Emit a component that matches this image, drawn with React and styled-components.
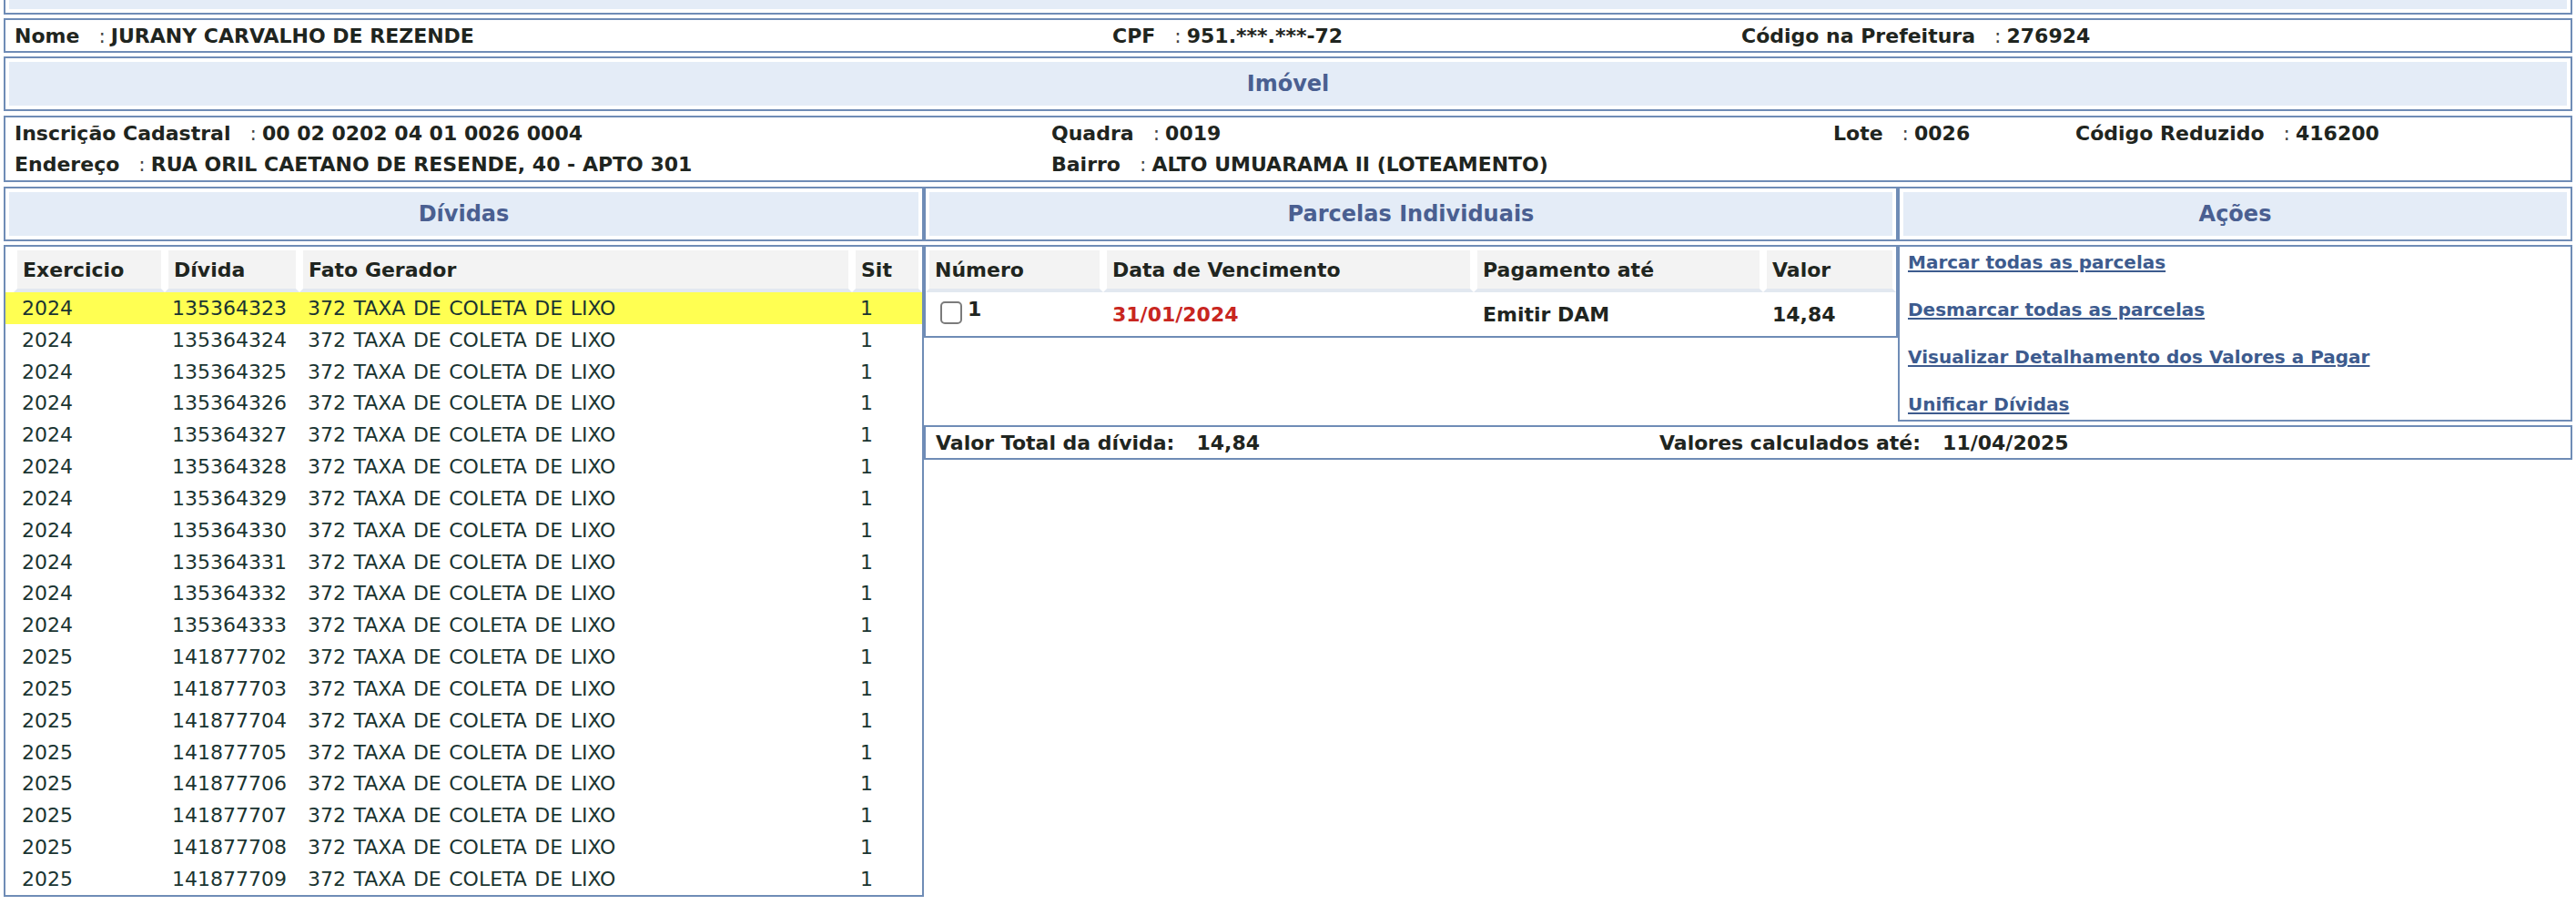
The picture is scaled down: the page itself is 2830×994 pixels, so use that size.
import React from 'react';
import styled, { createGlobalStyle } from 'styled-components';

const GlobalStyle = createGlobalStyle`
  body {
    margin: 0;
    background: #fff;
    font-family: "DejaVu Sans", Verdana, sans-serif;
    color: #1f2520;
  }
  * { box-sizing: border-box; }
`;

const Page = styled.div`
  width: 2830px;
  padding: 0 4px;
  display: flex;
  flex-direction: column;
`;

const Box = styled.div`
  border: 2px solid #6f8cb6;
  padding: ${p => p.$pad || '4px'};
  margin-top: ${p => (p.$gap === undefined ? 4 : p.$gap)}px;
  background: #fff;
`;

const StubBox = styled(Box)`
  border-top: none;
  padding-top: 0;
`;

const HeadCell = styled.div`
  background: #e4ecf7;
  height: ${p => p.$h || 48}px;
  display: flex;
  align-items: center;
  justify-content: center;
  font-size: 24px;
  font-weight: bold;
  color: #4a5f91;
`;

const InfoRow = styled.div`
  display: grid;
  grid-template-columns: ${p => p.$cols};
  height: ${p => p.$h}px;
  align-items: center;
  padding-left: 10px;
  font-size: 22px;
  white-space: nowrap;
`;

const Label = styled.span`
  font-weight: bold;
`;

const Colon = styled.span`
  font-weight: normal;
  color: #444;
  margin: 0 6px 0 21px;
`;

const Value = styled.span`
  font-weight: bold;
`;

const Field = ({ label, value }) => (
  <div>
    <Label>{label}</Label>
    <Colon>:</Colon>
    <Value>{value}</Value>
  </div>
);

const Columns = styled.div`
  display: flex;
  margin-top: 5px;
  align-items: flex-start;
`;

const LeftCol = styled.div`
  width: 1011px;
  flex: none;
  display: flex;
  flex-direction: column;
`;

const RightGrid = styled.div`
  flex: 1;
  display: grid;
  grid-template-columns: 1070px 741px;
  row-gap: 4px;
  align-items: start;
`;

const Wide = styled.div`
  grid-column: 1 / 3;
`;

const TableBox = styled.div`
  border: 2px solid #6f8cb6;
  margin-top: ${p => p.$gap || 0}px;
  background: #fff;
`;

const HeadRow = styled.div`
  display: grid;
  grid-template-columns: ${p => p.$cols};
  padding-left: ${p => p.$indent || 0}px;
`;

const Th = styled.div`
  background: #f3f3f3;
  border: 4px solid #fff;
  border-bottom: 4px solid #e2e8f0;
  height: 50px;
  padding-left: 6px;
  display: flex;
  align-items: center;
  font-size: 22px;
  font-weight: bold;
  white-space: nowrap;
`;

const DebtRow = styled.div`
  display: grid;
  grid-template-columns: 175px 148px 607px 77px;
  height: 34.84px;
  align-items: center;
  background: ${p => (p.$active ? '#ffff52' : '#fff')};
  font-size: 22px;
  word-spacing: 1.5px;
  color: #1a3431;
  white-space: nowrap;
`;

const Td = styled.div`
  padding-left: ${p => p.$pl || 9}px;
`;

const ParcelRow = styled.div`
  display: grid;
  grid-template-columns: 195px 407px 318px 146px;
  height: 48px;
  font-size: 22px;
  font-weight: bold;
  white-space: nowrap;
`;

const PTd = styled.div`
  padding-left: 10px;
  display: flex;
  align-items: center;
  color: ${p => p.$color || '#1f2520'};
`;

const CheckCell = styled.div`
  padding: 10px 0 0 16px;
  display: flex;
  align-items: flex-start;
`;

const Check = styled.input`
  appearance: none;
  width: 24px;
  height: 25px;
  margin: 0;
  border: 2px solid #7b7b7b;
  border-radius: 5px;
  background: #fff;
`;

const Num = styled.span`
  line-height: 26px;
  margin: -4px 0 0 6px;
`;

const LinksBox = styled.div`
  border: 2px solid #6f8cb6;
  padding: 4px 9px;
  height: 194px;
  display: flex;
  flex-direction: column;
  gap: 26px;
`;

const ActionLink = styled.a`
  font-size: 20px;
  line-height: 26px;
  font-weight: bold;
  color: #3d5b8e;
  text-decoration: underline;
  text-underline-offset: 2px;
  align-self: flex-start;
  cursor: pointer;
`;

const TotalRow = styled.div`
  display: grid;
  grid-template-columns: 795px 1fr;
  height: 34px;
  align-items: center;
  padding-left: 11px;
  font-size: 22px;
  font-weight: bold;
  white-space: nowrap;
`;

const TotalValue = styled.span`
  margin-left: 24px;
`;

const debts = [
  ...Array.from({ length: 11 }, (_, i) => ['2024', String(135364323 + i)]),
  ...Array.from({ length: 8 }, (_, i) => ['2025', String(141877702 + i)]),
];

export default function App() {
  return (
    <>
      <GlobalStyle />
      <Page>
        <StubBox $gap={0}>
          <HeadCell $h={10} />
        </StubBox>

        <Box $gap={4} $pad="0">
          <InfoRow $cols="1206px 691px 1fr" $h={34}>
            <Field label="Nome" value="JURANY CARVALHO DE REZENDE" />
            <Field label="CPF" value="951.***.***-72" />
            <Field label="Código na Prefeitura" value="276924" />
          </InfoRow>
        </Box>

        <Box $gap={4}>
          <HeadCell>Imóvel</HeadCell>
        </Box>

        <Box $gap={5} $pad="0">
          <InfoRow $cols="1139px 859px 266px 1fr" $h={34.5}>
            <Field label="Inscrição Cadastral" value="00 02 0202 04 01 0026 0004" />
            <Field label="Quadra" value="0019" />
            <Field label="Lote" value="0026" />
            <Field label="Código Reduzido" value="416200" />
          </InfoRow>
          <InfoRow $cols="1139px 1fr" $h={34.5}>
            <Field label="Endereço" value="RUA ORIL CAETANO DE RESENDE, 40 - APTO 301" />
            <Field label="Bairro" value="ALTO UMUARAMA II (LOTEAMENTO)" />
          </InfoRow>
        </Box>

        <Columns>
          <LeftCol>
            <Box $gap={0}>
              <HeadCell>Dívidas</HeadCell>
            </Box>
            <TableBox $gap={4}>
              <HeadRow $cols="166px 148px 607px 77px" $indent={9}>
                <Th>Exercicio</Th>
                <Th>Dívida</Th>
                <Th>Fato Gerador</Th>
                <Th>Sit</Th>
              </HeadRow>
              {debts.map(([year, id], i) => (
                <DebtRow key={id} $active={i === 0}>
                  <Td $pl={18}>{year}</Td>
                  <Td $pl={8}>{id}</Td>
                  <Td>372 TAXA DE COLETA DE LIXO</Td>
                  <Td>1</Td>
                </DebtRow>
              ))}
            </TableBox>
          </LeftCol>

          <RightGrid>
            <Box $gap={0}>
              <HeadCell>Parcelas Individuais</HeadCell>
            </Box>
            <Box $gap={0}>
              <HeadCell>Ações</HeadCell>
            </Box>

            <TableBox>
              <HeadRow $cols="195px 407px 318px 146px">
                <Th>Número</Th>
                <Th>Data de Vencimento</Th>
                <Th>Pagamento até</Th>
                <Th>Valor</Th>
              </HeadRow>
              <ParcelRow>
                <CheckCell>
                  <Check type="checkbox" />
                  <Num>1</Num>
                </CheckCell>
                <PTd $color="#c8261f">31/01/2024</PTd>
                <PTd>Emitir DAM</PTd>
                <PTd>14,84</PTd>
              </ParcelRow>
            </TableBox>

            <LinksBox>
              <ActionLink>Marcar todas as parcelas</ActionLink>
              <ActionLink>Desmarcar todas as parcelas</ActionLink>
              <ActionLink>Visualizar Detalhamento dos Valores a Pagar</ActionLink>
              <ActionLink>Unificar Dívidas</ActionLink>
            </LinksBox>

            <Wide>
              <Box $gap={0} $pad="0">
                <TotalRow>
                  <div>
                    Valor Total da dívida:<TotalValue>14,84</TotalValue>
                  </div>
                  <div>
                    Valores calculados até:<TotalValue>11/04/2025</TotalValue>
                  </div>
                </TotalRow>
              </Box>
            </Wide>
          </RightGrid>
        </Columns>
      </Page>
    </>
  );
}
